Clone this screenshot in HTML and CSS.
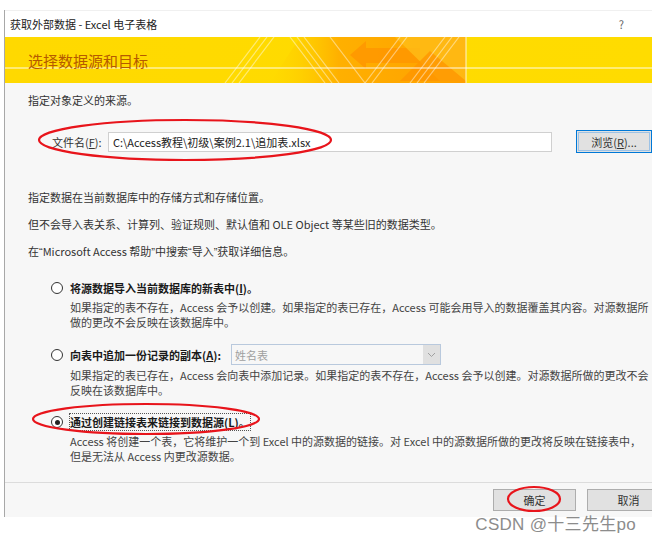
FILE: index.html
```html
<!DOCTYPE html>
<html>
<head>
    <title>获取外部数据 - Excel 电子表格</title>
    <link rel="stylesheet" href="styles.css">
</head>
<body>
    <div class="page">
        <div class="dialog">
            <div class="titlebar">
                <span>获取外部数据 - Excel 电子表格</span>
                <span class="help">?</span>
            </div>

            <div class="banner">
                <svg class="banner-art" width="647" height="46" viewBox="5 0 647 46">
                    <defs>
                        <linearGradient id="orange" x1="0" y1="0" x2="1" y2="0">
                            <stop offset="0" stop-color="#ffd000" stop-opacity="0"/>
                            <stop offset="0.35" stop-color="#ffb000"/>
                            <stop offset="1" stop-color="#ff9f00"/>
                        </linearGradient>
                    </defs>
                    <polygon points="300,0 466,0 466,46 270,46" fill="url(#orange)"/>
                    <polygon points="350,18 366,4 366,11 420,11 420,26 366,26 366,32" fill="#ff9600" opacity="0.85"/>
                    <polygon points="395,0 466,0 466,44 440,44" fill="#ffc21a" opacity="0.7"/>
                    <polygon points="400,44 430,14 466,44" fill="#ff9400" opacity="0.75"/>
                    <g stroke="#fff" stroke-opacity="0.45" stroke-width="1.2" fill="none">
                        <line x1="225" y1="46" x2="260" y2="0"/>
                        <line x1="232" y1="46" x2="267" y2="0"/>
                        <line x1="239" y1="46" x2="274" y2="0"/>
                        <line x1="290" y1="0" x2="325" y2="46"/>
                        <line x1="297" y1="0" x2="332" y2="46"/>
                        <line x1="304" y1="0" x2="339" y2="46"/>
                        <line x1="330" y1="0" x2="365" y2="46"/>
                        <line x1="365" y1="46" x2="400" y2="0"/>
                        <line x1="372" y1="46" x2="407" y2="0"/>
                        <line x1="410" y1="46" x2="445" y2="0"/>
                        <line x1="417" y1="46" x2="452" y2="0"/>
                        <line x1="424" y1="46" x2="459" y2="0"/>
                    </g>
                    <line x1="466" y1="0" x2="466" y2="46" stroke="#fff" stroke-opacity="0.8"/>
                    <line x1="5" y1="31" x2="652" y2="31" stroke="#fff" stroke-opacity="0.9"/>
                </svg>
                <div class="banner-title">选择数据源和目标</div>
            </div>

            <div class="content">
                <p class="line">指定对象定义的来源。</p>

                <div class="file-row">
                    <label class="file-label">文件名(<u>F</u>):</label>
                    <div class="file-input">C:\Access教程\初级\案例2.1\追加表.xlsx</div>
                    <button class="browse">浏览(<u>R</u>)...</button>
                </div>

                <p class="line gap-big">指定数据在当前数据库中的存储方式和存储位置。</p>
                <p class="line gap">但不会导入表关系、计算列、验证规则、默认值和 OLE Object 等某些旧的数据类型。</p>
                <p class="line gap">在<span class="q">“</span>Microsoft Access 帮助<span class="q">”</span>中搜索<span class="q">“</span>导入<span class="q">”</span>获取详细信息。</p>

                <div class="option opt1">
                    <span class="radio"></span>
                    <span class="option-label">将源数据导入当前数据库的新表中(<u>I</u>)。</span>
                </div>
                <div class="desc">
                    <div>如果指定的表不存在，Access 会予以创建。如果指定的表已存在，Access 可能会用导入的数据覆盖其内容。对源数据所</div>
                    <div>做的更改不会反映在该数据库中。</div>
                </div>

                <div class="option opt2">
                    <span class="radio"></span>
                    <span class="option-label">向表中追加一份记录的副本(<u>A</u>):</span>
                    <div class="select">
                        <span>姓名表</span>
                        <span class="select-btn">
                            <svg width="9" height="6" viewBox="0 0 9 6"><polyline points="1,1 4.5,4.5 8,1" fill="none" stroke="#a0a0a0" stroke-width="1"/></svg>
                        </span>
                    </div>
                </div>
                <div class="desc desc2">
                    <div>如果指定的表已存在，Access 会向表中添加记录。如果指定的表不存在，Access 会予以创建。对源数据所做的更改不会</div>
                    <div>反映在该数据库中。</div>
                </div>

                <div class="option opt3">
                    <span class="radio checked"></span>
                    <span class="option-label focus">通过创建链接表来链接到数据源(<u>L</u>)。</span>
                </div>
                <div class="desc">
                    <div>Access 将创建一个表，它将维护一个到 Excel 中的源数据的链接。对 Excel 中的源数据所做的更改将反映在链接表中，</div>
                    <div>但是无法从 Access 内更改源数据。</div>
                </div>
            </div>

            <div class="footer">
                <button class="btn">确定</button>
                <button class="btn">取消</button>
            </div>
        </div>

        <svg class="marks" width="652" height="541">
            <ellipse cx="185" cy="140" rx="146" ry="20"/>
            <ellipse cx="146" cy="419" rx="113" ry="15"/>
            <ellipse cx="534" cy="499" rx="26" ry="12"/>
        </svg>

        <div class="watermark">CSDN @十三先生po</div>
    </div>
</body>
</html>
```

FILE: styles.css
```css
body {
    margin: 0;
    background-color: #fff;
    font-family: "Noto Sans CJK SC", "Noto Sans", sans-serif;
    font-size: 11px;
    color: #333;
}
.page {
    position: relative;
    width: 652px;
    height: 541px;
    overflow: hidden;
    padding-top: 10px;
    box-sizing: border-box;
}
.dialog {
    margin-left: 4px;
    width: 648px;
    height: 507px;
    border-left: 1px solid #a8a8a8;
    background-color: #f7f7f7;
    overflow: hidden;
    box-sizing: border-box;
}
.titlebar {
    height: 27px;
    background-color: #fff;
    display: flex;
    align-items: center;
    justify-content: space-between;
    padding: 0 28px 0 5px;
    color: #222;
    border-top: 1px solid #f0f0f0;
    box-sizing: border-box;
}
.help {
    color: #666;
}
.banner {
    position: relative;
    height: 46px;
    background: linear-gradient(90deg, #ffd900 0%, #ffdb00 60%, #ffdc00 100%);
    box-sizing: border-box;
    padding: 14px 0 0 23px;
}
.banner-art {
    position: absolute;
    left: 0;
    top: 0;
}
.banner-title {
    position: relative;
    font-size: 15px;
    line-height: 20px;
    color: #b55a00;
}
.content {
    padding: 9px 0 0 23px;
}
.line {
    margin: 0;
    line-height: 16px;
    white-space: nowrap;
}
.q {
    font-family: "Liberation Sans", sans-serif;
}
.gap-big {
    margin-top: 36px;
}
.gap {
    margin-top: 11px;
}
.file-row {
    display: flex;
    align-items: center;
    margin-top: 22px;
    height: 23px;
}
.file-row u, .option-label u, .browse u {
    text-decoration: underline;
}
.file-label {
    margin-left: 24px;
    width: 56px;
}
.file-input {
    width: 445px;
    height: 20px;
    line-height: 19px;
    background-color: #fff;
    border: 1px solid #d0d0d0;
    box-sizing: border-box;
    padding-left: 4px;
    color: #222;
}
.browse {
    margin-left: 24px;
    width: 76px;
    height: 23px;
    flex-shrink: 0;
    font-family: inherit;
    font-size: 11px;
    color: #333;
    background-color: #e1e1e1;
    border: 1px solid #0078d7;
    box-shadow: inset 0 0 0 1px #e1e1e1, inset 0 0 0 2px #9cc2e6;
    padding: 0;
}
.option {
    display: flex;
    align-items: center;
    padding-left: 23px;
    white-space: nowrap;
}
.opt1 {
    margin-top: 20px;
    height: 16px;
}
.opt2 {
    margin-top: 14px;
    height: 21px;
}
.opt3 {
    margin-top: 16px;
    height: 16px;
}
.radio {
    width: 12px;
    height: 12px;
    border: 1px solid #333;
    border-radius: 50%;
    background-color: #fff;
    box-sizing: border-box;
    margin-right: 7px;
    position: relative;
}
.radio.checked::after {
    content: "";
    position: absolute;
    left: 2.5px;
    top: 2.5px;
    width: 5px;
    height: 5px;
    border-radius: 50%;
    background-color: #222;
}
.option-label {
    font-weight: bold;
    color: #1a1a1a;
}
.option-label.focus {
    outline: 1px dotted #555;
    outline-offset: 0;
}
.select {
    margin-left: 10px;
    width: 210px;
    height: 21px;
    border: 1px solid #b9c9dd;
    box-sizing: border-box;
    display: flex;
    align-items: center;
    justify-content: space-between;
    padding-left: 3px;
    color: #a0a0a0;
    background-color: #f7f7f7;
}
.select-btn {
    width: 17px;
    height: 19px;
    background-color: #e0e0e0;
    display: flex;
    align-items: center;
    justify-content: center;
}
.desc {
    padding-left: 42px;
    margin-top: 4px;
    line-height: 15px;
    white-space: nowrap;
    color: #444;
}
.desc2 {
    margin-top: 3px;
}
.footer {
    margin-top: 18px;
    border-top: 1px solid #dcdcdc;
    display: flex;
    gap: 11px;
    padding: 6px 0 0 488px;
}
.btn {
    width: 83px;
    height: 22px;
    flex-shrink: 0;
    font-family: inherit;
    font-size: 11px;
    color: #333;
    background-color: #e1e1e1;
    border: 1px solid #adadad;
    padding: 0;
}
.marks {
    position: absolute;
    left: 0;
    top: 0;
    pointer-events: none;
}
.marks ellipse {
    fill: none;
    stroke: #e8141b;
    stroke-width: 2.2;
}
.watermark {
    position: absolute;
    right: 16px;
    top: 510px;
    font-family: "Liberation Sans", "Noto Sans CJK SC", sans-serif;
    font-size: 17px;
    color: #8c8c8c;
    letter-spacing: 0.3px;
}
```
